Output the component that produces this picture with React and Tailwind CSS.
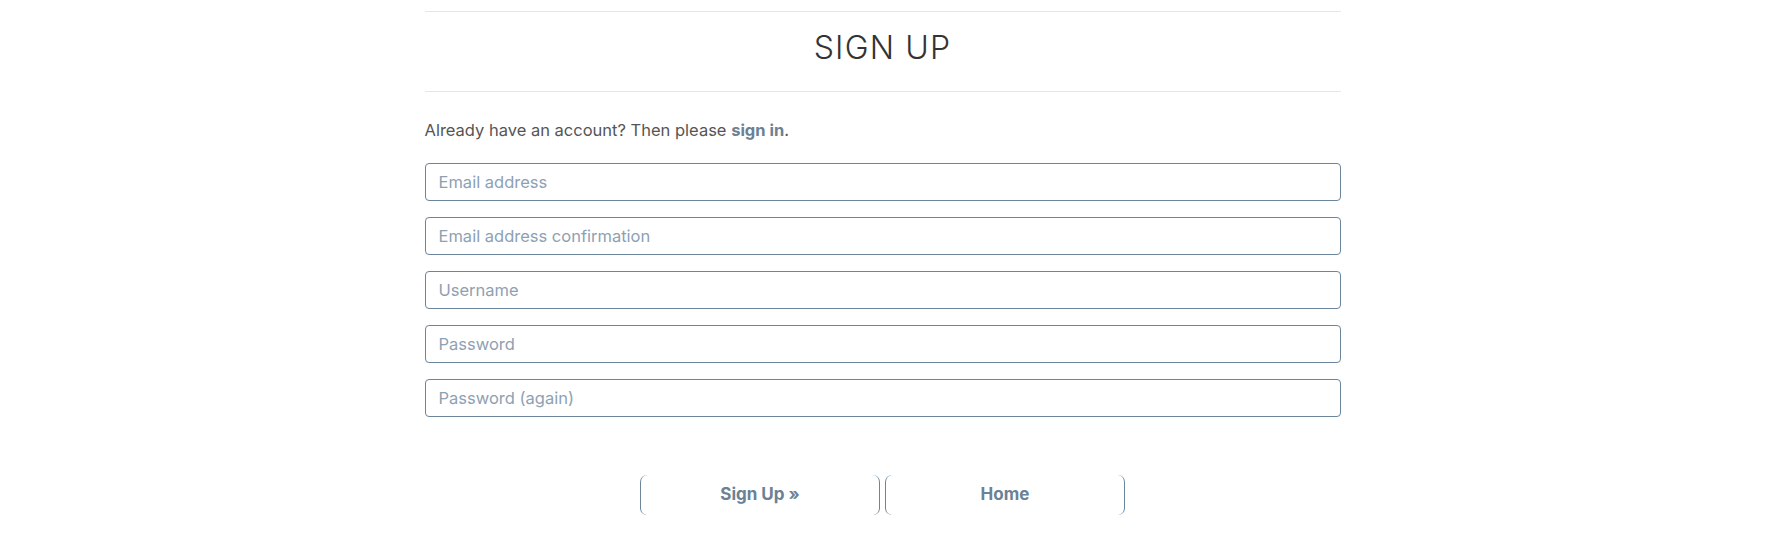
export default function App() {
  const fields = [
    "Email address",
    "Email address confirmation",
    "Username",
    "Password",
    "Password (again)",
  ];
  return (
    <div
      className="min-h-screen bg-white"
      style={{ fontFamily: "Inter, 'DejaVu Sans', sans-serif" }}
    >
      <div className="mx-auto w-[916px] pt-[11px]">
        <div className="border-t border-[#e5e5e5]" />
        <h1 className="flex h-[79px] items-center justify-center pb-[8px] text-[32px] font-light tracking-[1.2px] text-[#333333]">
          SIGN UP
        </h1>
        <div className="border-t border-[#e5e5e5]" />
        <p className="mt-[26px] text-[16.5px] leading-[24px] text-[#555555]">
          Already have an account? Then please{" "}
          <a className="font-bold text-[#6a8196]">sign in</a>
          <span className="font-normal text-[#555555]">.</span>
        </p>
        <form className="mt-[21px] flex flex-col gap-[16px]">
          {fields.map((f) => (
            <input
              key={f}
              placeholder={f}
              type={f.startsWith("Password") ? "password" : "text"}
              className="h-[38px] w-full rounded-[4px] border border-[#6b859c] px-[13px] text-[16.5px] text-[#333] outline-none placeholder:text-[#8ea1b3]"
            />
          ))}
        </form>
        <div className="mt-[58px] flex justify-center gap-[5px]">
          <button className="h-[40px] w-[240px] rounded-[7px] border-x border-[#6b859c] text-[17px] font-bold text-[#6a8196]">
            Sign Up »
          </button>
          <button className="h-[40px] w-[240px] rounded-[7px] border-x border-[#6b859c] text-[17px] font-bold text-[#6a8196]">
            Home
          </button>
        </div>
      </div>
    </div>
  );
}
